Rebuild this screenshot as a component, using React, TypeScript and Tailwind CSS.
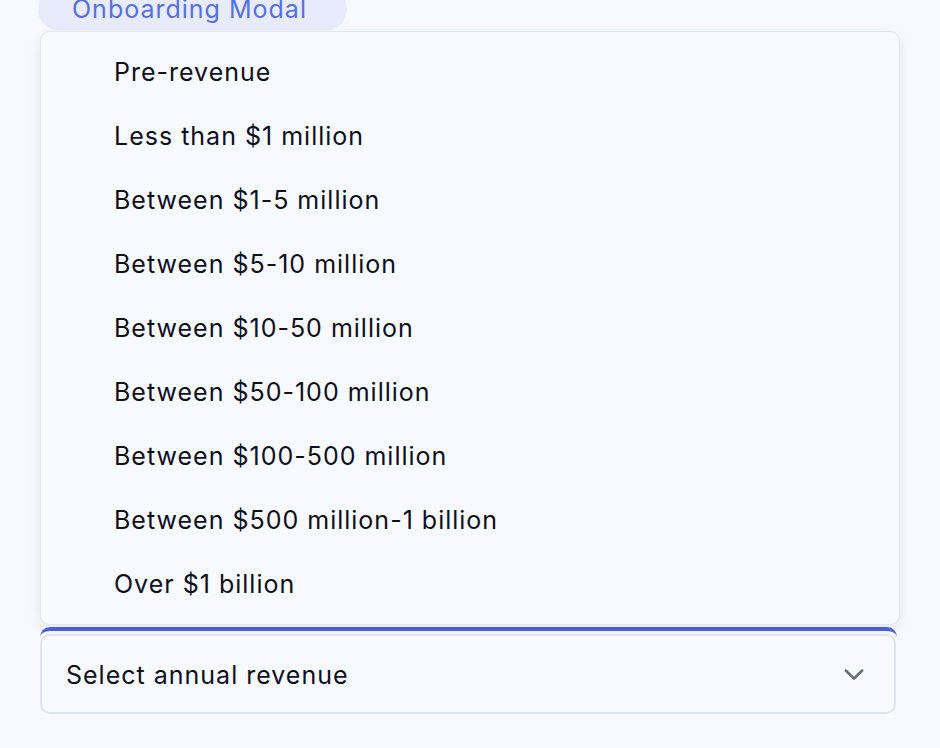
import React from 'react';

const options = [
  'Pre-revenue',
  'Less than $1 million',
  'Between $1-5 million',
  'Between $5-10 million',
  'Between $10-50 million',
  'Between $50-100 million',
  'Between $100-500 million',
  'Between $500 million-1 billion',
  'Over $1 billion',
];

export default function App() {
  return (
    <div
      className="w-[940px] h-[748px] overflow-hidden bg-[#f8f9fe] text-[#0c0f1c] tracking-[1px]"
      style={{ fontFamily: 'Inter, "Noto Sans", sans-serif' }}
    >
      {/* Header pill, partly scrolled off */}
      <div className="ml-[38px] -mt-[11px] h-[41px] w-[309px] rounded-full bg-[#e8ebfc] px-[34px] flex items-center text-[25px] leading-none text-[#5670e2]">
        Onboarding Modal
      </div>

      {/* Open listbox */}
      <ul className="ml-[40px] mt-[1px] w-[860px] rounded-[10px] border border-[#e2e6ee] bg-[#f9faff] py-[8px] shadow-[0_4px_14px_rgba(15,23,42,0.08)]">
        {options.map((o) => (
          <li key={o} className="h-[64px] pl-[73px] pt-[1px] flex items-center text-[25px] leading-none">
            {o}
          </li>
        ))}
      </ul>

      {/* Select trigger with focus bar */}
      <div className="ml-[40px] mt-[2px] w-[857px] rounded-[10px] border-t-[4px] border-[#4a62d0] pt-[3px]">
        <div className="w-[856px] h-[80px] rounded-[10px] border-2 border-[#e1e4ec] bg-[#f9faff] pl-[24px] pr-[26px] flex items-center justify-between">
          <span className="text-[25px] leading-none pt-[2px]">Select annual revenue</span>
          <svg width="28" height="28" viewBox="0 0 24 24" fill="none" stroke="#6b6b6f" strokeWidth="2.2" strokeLinecap="round" strokeLinejoin="round">
            <path d="M5 9l7 7 7-7" />
          </svg>
        </div>
      </div>
    </div>
  );
}
